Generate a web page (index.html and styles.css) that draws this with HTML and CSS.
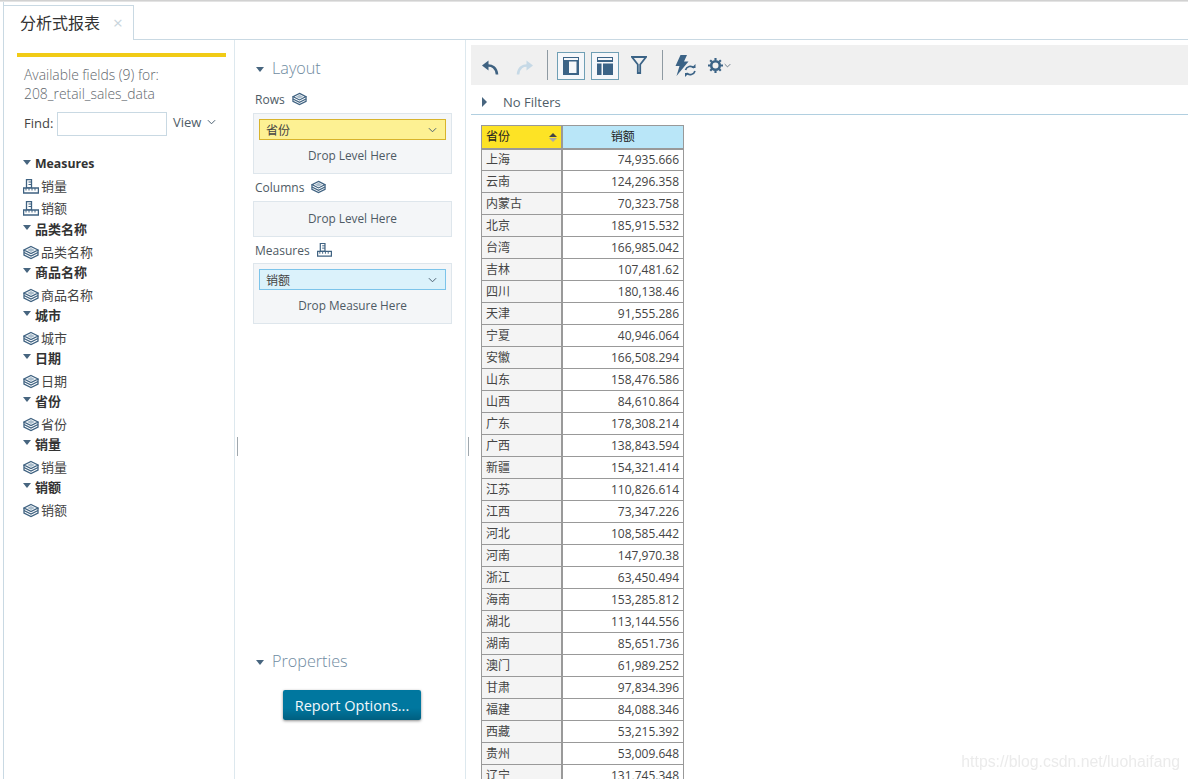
FILE: index.html
```html
<!DOCTYPE html>
<html lang="zh">
<head>
<meta charset="utf-8">
<title>分析式报表</title>
<link rel="stylesheet" href="styles.css">
</head>
<body>
<svg class="defs" width="0" height="0" aria-hidden="true">
  <symbol id="cube" viewBox="0 0 16 14">
    <path d="M8 1 15 4.500 8 8 1 4.500Z" fill="#fff" stroke="#3f6281" stroke-width="1.300"/>
    <path d="M1 4.500V9.500L8 13 15 9.500V4.500" fill="none" stroke="#3f6281" stroke-width="1.300"/>
    <path d="M1 7 8 10.500 15 7" fill="none" stroke="#3f6281" stroke-width="1.300"/>
    <path d="M4 4.500 8 2.500 12 4.500 8 6.500Z" fill="#a9bccb"/>
  </symbol>
  <symbol id="ruler" viewBox="0 0 16 15">
    <path d="M3.500 .5H8.500V9H3.500Z" fill="#fff" stroke="#3f6281" stroke-width="1.300"/>
    <path d="M5.500 3H8.500M5.500 5.500H8.500" stroke="#3f6281"/>
    <path d="M.6 9H15.400V14H.6Z" fill="#fff" stroke="#3f6281" stroke-width="1.300"/>
    <path d="M3 9V11.500M6 9V11.500M9 9V11.500M12 9V11.500" stroke="#3f6281"/>
  </symbol>
  <symbol id="chev" viewBox="0 0 10 6">
    <path d="M1 1 5 5 9 1" fill="none" stroke="#4a5f70" stroke-width="1.100"/>
  </symbol>
</svg>

<div class="topline"></div>
<div class="tabbar">
  <div class="tab"><span class="tab-title">分析式报表</span><span class="tab-close">×</span></div>
</div>

<div class="workspace">
  <aside class="fields">
    <div class="yellow-bar"></div>
    <p class="avail">Available fields (9) for:<br>208_retail_sales_data</p>
    <div class="find">
      <label class="find-label" for="find">Find:</label>
      <input class="find-input" id="find" type="text">
      <span class="view">View</span>
      <svg class="view-chev"><use href="#chev"/></svg>
    </div>
    <ul class="tree">
      <li class="head head-latin"><i class="tri"></i>Measures</li>
      <li class="item"><svg class="ico"><use href="#ruler"/></svg>销量</li>
      <li class="item item-up"><svg class="ico"><use href="#ruler"/></svg>销额</li>
      <li class="head"><i class="tri"></i>品类名称</li>
      <li class="item"><svg class="ico"><use href="#cube"/></svg>品类名称</li>
      <li class="head"><i class="tri"></i>商品名称</li>
      <li class="item"><svg class="ico"><use href="#cube"/></svg>商品名称</li>
      <li class="head"><i class="tri"></i>城市</li>
      <li class="item"><svg class="ico"><use href="#cube"/></svg>城市</li>
      <li class="head"><i class="tri"></i>日期</li>
      <li class="item"><svg class="ico"><use href="#cube"/></svg>日期</li>
      <li class="head"><i class="tri"></i>省份</li>
      <li class="item"><svg class="ico"><use href="#cube"/></svg>省份</li>
      <li class="head"><i class="tri"></i>销量</li>
      <li class="item"><svg class="ico"><use href="#cube"/></svg>销量</li>
      <li class="head"><i class="tri"></i>销额</li>
      <li class="item"><svg class="ico"><use href="#cube"/></svg>销额</li>
    </ul>
  </aside>
  <div class="splitter"><i class="grip"></i></div>

  <section class="layout">
    <div class="layout-top">
      <h2 class="section"><i class="tri tri-sec"></i>Layout</h2>
      <div class="label label-rows">Rows<svg class="ico-label"><use href="#cube"/></svg></div>
      <div class="drop drop-rows">
        <div class="chip chip-yellow"><span>省份</span><svg class="chip-chev"><use href="#chev"/></svg></div>
        <div class="drop-text">Drop Level Here</div>
      </div>
      <div class="label">Columns<svg class="ico-label"><use href="#cube"/></svg></div>
      <div class="drop drop-cols">
        <div class="drop-text">Drop Level Here</div>
      </div>
      <div class="label">Measures<svg class="ico-label"><use href="#ruler"/></svg></div>
      <div class="drop drop-meas">
        <div class="chip chip-blue"><span>销额</span><svg class="chip-chev"><use href="#chev"/></svg></div>
        <div class="drop-text">Drop Measure Here</div>
      </div>
    </div>
    <div class="props">
      <h2 class="section"><i class="tri tri-sec"></i>Properties</h2>
      <button class="report-btn" type="button">Report Options...</button>
    </div>
  </section>
  <div class="splitter"><i class="grip"></i></div>

  <main class="report">
    <div class="toolbar">
      <svg class="tb tb-undo" viewBox="0 0 18 15"><path d="M1 5.500 7.500 .5V10.500Z" fill="#3f6281"/><path d="M6 5.500C11 5 15.500 7.500 16 14.500" fill="none" stroke="#3f6281" stroke-width="2.600"/></svg>
      <svg class="tb tb-redo" viewBox="0 0 18 15"><path d="M17 5.500 10.500 .5V10.500Z" fill="#c6d9e6"/><path d="M12 5.500C7 5 2.500 7.500 2 14.500" fill="none" stroke="#c6d9e6" stroke-width="2.600"/></svg>
      <span class="tb-sep"></span>
      <span class="tb-btn"><svg viewBox="0 0 16 18"><path fill-rule="evenodd" d="M0 0H16V18H0ZM1 1V3H15V1ZM6 4.500V16H13.500V4.500Z" fill="#3b6386"/></svg></span>
      <span class="tb-btn"><svg viewBox="0 0 16 18"><path fill-rule="evenodd" d="M0 0H16V5H0ZM1 1V3H15V1ZM0 6.500H4.500V18H0ZM6 6.500H16V18H6Z" fill="#3b6386"/></svg></span>
      <svg class="tb tb-filter" viewBox="0 0 16 18"><path d="M1 1H15L9.200 8.500V17H6.800V8.500Z" fill="none" stroke="#3b6386" stroke-width="1.800"/></svg>
      <span class="tb-sep tb-sep-2"></span>
      <svg class="tb tb-bolt" viewBox="0 0 22 22"><path d="M6.500 0H13L10 6.500H14.500L2.500 21 5.500 11H1.500Z" fill="#3b6386"/><path d="M11.500 15A5 5 0 0 1 20 13M21 16A5 5 0 0 1 12.500 18" fill="none" stroke="#3b6386" stroke-width="1.700"/><path d="M17.500 13H21.500V9ZM15 18H11V22Z" fill="#3b6386"/></svg>
      <svg class="tb tb-gear" viewBox="0 0 14 14"><circle cx="7" cy="7" r="4" fill="none" stroke="#3b6386" stroke-width="2.400"/><path d="M7 0V14M0 7H14M2 2 12 12M12 2 2 12" stroke="#3b6386" stroke-width="2" stroke-dasharray="2.200 9.600"/></svg>
      <svg class="tb-gear-chev"><use href="#chev"/></svg>
    </div>
    <div class="filters"><i class="tri-right"></i><span>No Filters</span></div>
    <table class="grid">
      <thead>
        <tr><th class="h-row"><span>省份</span><i class="sort"></i></th><th class="h-val">销额</th></tr>
      </thead>
      <tbody>
        <tr><th>上海</th><td>74,935.666</td></tr>
        <tr><th>云南</th><td>124,296.358</td></tr>
        <tr><th>内蒙古</th><td>70,323.758</td></tr>
        <tr><th>北京</th><td>185,915.532</td></tr>
        <tr><th>台湾</th><td>166,985.042</td></tr>
        <tr><th>吉林</th><td>107,481.62</td></tr>
        <tr><th>四川</th><td>180,138.46</td></tr>
        <tr><th>天津</th><td>91,555.286</td></tr>
        <tr><th>宁夏</th><td>40,946.064</td></tr>
        <tr><th>安徽</th><td>166,508.294</td></tr>
        <tr><th>山东</th><td>158,476.586</td></tr>
        <tr><th>山西</th><td>84,610.864</td></tr>
        <tr><th>广东</th><td>178,308.214</td></tr>
        <tr><th>广西</th><td>138,843.594</td></tr>
        <tr><th>新疆</th><td>154,321.414</td></tr>
        <tr><th>江苏</th><td>110,826.614</td></tr>
        <tr><th>江西</th><td>73,347.226</td></tr>
        <tr><th>河北</th><td>108,585.442</td></tr>
        <tr><th>河南</th><td>147,970.38</td></tr>
        <tr><th>浙江</th><td>63,450.494</td></tr>
        <tr><th>海南</th><td>153,285.812</td></tr>
        <tr><th>湖北</th><td>113,144.556</td></tr>
        <tr><th>湖南</th><td>85,651.736</td></tr>
        <tr><th>澳门</th><td>61,989.252</td></tr>
        <tr><th>甘肃</th><td>97,834.396</td></tr>
        <tr><th>福建</th><td>84,088.346</td></tr>
        <tr><th>西藏</th><td>53,215.392</td></tr>
        <tr><th>贵州</th><td>53,009.648</td></tr>
        <tr><th>辽宁</th><td>131,745.348</td></tr>
      </tbody>
    </table>
  </main>
</div>
<div class="watermark">https://blog.csdn.net/luohaifang</div>
</body>
</html>
```
FILE: styles.css
```css
* { box-sizing: border-box; }
html, body { margin: 0; padding: 0; height: 779px; overflow: hidden; background: #fff; }
body {
  position: relative;
  display: flex;
  flex-direction: column;
  width: 1188px;
  font-family: "Open Sans", "Noto Sans CJK SC", sans-serif;
  font-size: 12px;
  color: #333;
}
.defs { position: absolute; }
ul, p, h2 { margin: 0; padding: 0; }
ul { list-style: none; }

.topline { height: 2px; background: linear-gradient(#c8c8c8, #ececec); flex: none; }
.tabbar {
  height: 38px;
  flex: none;
  margin-left: 3px;
  padding-top: 3px;
  border-bottom: 1px solid #c9d9e3;
  border-left: 1px solid #c9d9e3;
  display: flex;
}
.tab {
  width: 131px;
  height: 35px;
  margin-left: -1px;
  padding: 0 0 0 16px;
  background: #fff;
  border: 1px solid #c9d9e3;
  border-bottom: 0;
  display: flex;
  align-items: center;
}
.tab-title { font-size: 16px; color: #333; line-height: 20px; }
.tab-close { margin-left: 13px; font-size: 17px; color: #c8d4dc; line-height: 20px; }

.workspace { flex: 1; display: flex; min-height: 0; margin-left: 3px; border-left: 1px solid #c9d9e3; }

.fields { width: 231px; flex: none; padding: 13px 0 0 13px; border-right: 1px solid #dde8ee; }
.yellow-bar { width: 209px; height: 4px; background: #f1cb16; }
.avail { margin: 8px 0 0 7px; font-size: 13.900px; font-weight: 300; line-height: 19px; color: #5f676d; }
.find { display: flex; align-items: center; margin: 9px 0 0 7px; height: 24px; font-size: 13px; }
.find-label { color: #444; width: 33px; margin-bottom: 3px; }
.find-input { width: 110px; height: 24px; border: 1px solid #c9d9e3; background: #fff; padding: 0; }
.view { margin-left: 6px; color: #4f5d68; margin-bottom: 5px; }
.view-chev { width: 9px; height: 6px; margin: 0 0 4px 6px; }

.tree { margin: 17px 0 0 6px; }
.head {
  height: 20px; line-height: 20px; font-size: 13px; font-weight: 700; color: #333;
  display: flex; align-items: center;
}
.head-latin { font-size: 12.300px; padding-top: 2px; }
.item { height: 23px; padding-top: 3px; font-size: 13px; line-height: 20px; display: flex; align-items: center; color: #444; }
.item-up { padding-top: 1px; }
.tri {
  width: 0; height: 0; flex: none; margin: 0 4px 3px 0;
  border-left: 4.500px solid transparent; border-right: 4.500px solid transparent;
  border-top: 5px solid #47657f;
}
.ico { width: 16px; height: 15px; margin-right: 2px; flex: none; }

.splitter { width: 5px; flex: none; position: relative; }
.grip { position: absolute; left: 2px; top: 397px; width: 1px; height: 19px; background: #a0a8ae; }

.layout {
  width: 226px; flex: none; padding: 0 12px 0 13px;
  border-right: 1px solid #dde8ee;
  display: flex; flex-direction: column;
}
.layout-top { flex: 1; }
.section { height: 20px; margin-top: 18px; font-size: 16.200px; font-weight: 300; line-height: 20px; color: #6f8ba1; display: flex; align-items: center; }
.tri-sec { margin: 2px 8px 0 3px; }
.label { height: 20px; margin-top: 3px; padding-left: 2px; display: flex; align-items: center; font-size: 12px; color: #4e5a64; }
.label-rows { margin-top: 11px; }
.ico-label { width: 15px; height: 14px; margin-left: 7px; }
.drop { width: 199px; background: #f4f6f8; border: 1px solid #dee6ec; padding: 5px 5px 0; }
.drop-rows { height: 61px; margin-top: 4px; }
.drop-cols { height: 36px; padding-top: 7px; margin-top: 4px; }
.drop-meas { height: 61px; margin-top: 3px; }
.drop-text { text-align: center; font-size: 11.800px; color: #4e5a64; line-height: 18px; }
.chip {
  height: 21px; margin-bottom: 6px; padding: 0 8px 0 6px;
  display: flex; align-items: center; justify-content: space-between;
  color: #444; font-size: 12px;
}
.chip-yellow { background: #fdf193; border: 1px solid #d8b42c; }
.chip-blue { background: #dbf2fb; border: 1px solid #7cc4ea; }
.chip-chev { width: 9px; height: 6px; }

.props { height: 128px; flex: none; }
.props .section { margin-top: 0; }
.report-btn {
  display: block; width: 138px; height: 30px; margin: 19px 0 0 30px; padding: 0;
  border: 0; border-radius: 2px;
  background: linear-gradient(#00779f 60%, #005f80);
  box-shadow: 0 1px 3px rgba(0,0,0,.45);
  color: #f2f8fb; font-family: inherit; font-size: 14.500px;
}

.report { flex: 1; min-width: 0; padding-top: 5px; }
.toolbar { height: 40px; background: #f0f0f0; display: flex; align-items: center; padding-left: 10px; }
.tb { flex: none; display: block; }
.tb-undo { width: 18px; height: 15px; margin-top: 4px; }
.tb-redo { width: 18px; height: 15px; margin: 4px 0 0 17px; }
.tb-sep { width: 1px; height: 30px; background: #8e9aa2; margin: 0 9px 0 13px; flex: none; }
.tb-btn { width: 28px; height: 28px; border: 1px solid #6f9fb5; background: #f5f7fa; margin-right: 6px; padding: 4px 5px; flex: none; display: block; margin-top: 1px; }
.tb-btn svg { display: block; width: 16px; height: 18px; }
.tb-filter { width: 16px; height: 18px; margin-left: 6px; }
.tb-sep-2 { margin: 0 11px 0 15px; }
.tb-bolt { width: 22px; height: 22px; margin-top: 2px; }
.tb-gear { width: 15px; height: 15px; margin: 0 0 0 12px; }
.tb-gear-chev { width: 7px; height: 5px; margin: 0 0 0 1px; }

.filters { height: 30px; padding-top: 5px; border-bottom: 1px solid #b1cfe0; display: flex; align-items: center; margin-bottom: 10px; }
.tri-right {
  width: 0; height: 0; margin-left: 11px;
  border-top: 5px solid transparent; border-bottom: 5px solid transparent;
  border-left: 5px solid #47657f;
}
.filters span { margin-left: 16px; color: #4f5d68; font-size: 13px; }

.grid { margin-left: 10px; border-collapse: collapse; table-layout: fixed; width: 203px; font-size: 12px; }
.grid th, .grid td { height: 22px; padding: 0 4px; border: 1px solid #999; font-weight: 400; line-height: 20px; color: #444; }
.grid tbody th { width: 80px; text-align: left; background: #f4f4f4; border-right: 2px solid #999; }
.grid td { text-align: right; background: #fff; }
.grid thead th { height: 23px; color: #222; border-bottom: 2px solid #999; }
.grid .h-row { width: 80px; background: #fde325; text-align: left; position: relative; border-right: 2px solid #999; }
.grid .h-val { background: #b9e6f8; text-align: center; }
.sort {
  position: absolute; right: 4px; top: 7px; width: 0; height: 0;
  border-left: 4px solid transparent; border-right: 4px solid transparent;
  border-bottom: 4px solid #444;
}
.sort::after {
  content: ""; position: absolute; left: -4px; top: 5px; width: 0; height: 0;
  border-left: 4px solid transparent; border-right: 4px solid transparent;
  border-top: 4px solid #a8a8a8;
}

.watermark {
  position: absolute; right: 8px; bottom: 7px;
  font-family: "Liberation Sans", sans-serif; font-size: 15.800px; line-height: 20px;
  color: #ebebeb; filter: blur(.5px);
}
```
